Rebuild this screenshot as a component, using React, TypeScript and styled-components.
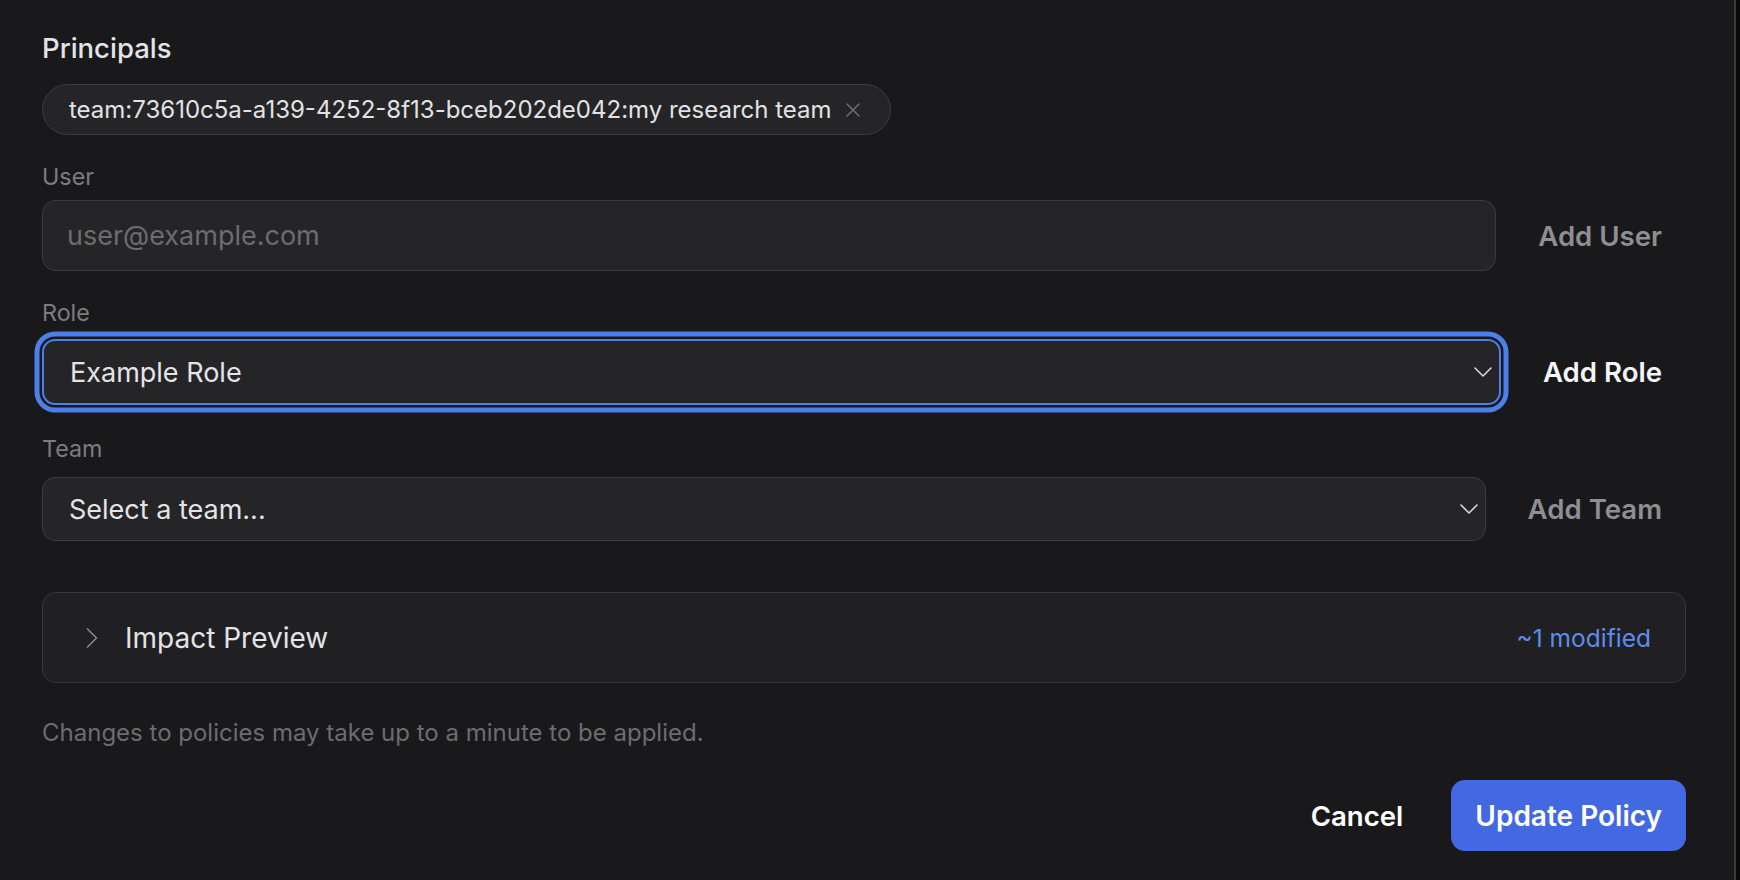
import React from "react";
import styled, { createGlobalStyle } from "styled-components";

const GlobalStyle = createGlobalStyle`
  html, body { margin: 0; padding: 0; background: #0a0a0b; }
  body { font-family: Inter, "Noto Sans", sans-serif; -webkit-font-smoothing: antialiased; }
  * { box-sizing: border-box; }
`;

const Panel = styled.div`
  width: 1736px;
  height: 880px;
  background: #19191b;
  border-right: 2px solid #3a3a3c;
  padding: 31px 48px 0 42px;
  display: flex;
  flex-direction: column;
`;

const Title = styled.div`
  font-size: 27.5px;
  line-height: 34px;
  font-weight: 500;
  color: #e4e4e7;
`;

const Chip = styled.div`
  align-self: flex-start;
  display: inline-flex;
  align-items: center;
  gap: 14px;
  height: 51px;
  margin-top: 19px;
  padding: 0 30px 0 26px;
  border-radius: 999px;
  background: #252527;
  border: 1.5px solid #3c3c3f;
  font-size: 24px;
  color: #e2e2e5;
`;

const RemoveIcon = styled.svg`
  width: 14px;
  height: 14px;
  flex: none;
`;

const Field = styled.div<{ $top: number; $gap: number }>`
  display: flex;
  flex-direction: column;
  gap: ${(p) => p.$gap}px;
  margin-top: ${(p) => p.$top}px;
`;

const Label = styled.div`
  font-size: 23.3px;
  line-height: 28px;
  color: #7c7c81;
`;

const Row = styled.div`
  display: flex;
  align-items: center;
  gap: 18px;
`;

const TextInput = styled.input`
  flex: 1;
  min-width: 0;
  height: 71px;
  background: #252527;
  border: 1.5px solid #3b3b3e;
  border-radius: 13px;
  padding: 0 24px;
  font-family: inherit;
  font-size: 27px;
  color: #e4e4e7;
  outline: none;
  &::placeholder {
    color: #6c6c71;
  }
`;

const SelectBox = styled.div<{ $focused?: boolean; $height: number }>`
  flex: 1;
  min-width: 0;
  height: ${(p) => p.$height}px;
  display: flex;
  align-items: center;
  justify-content: space-between;
  padding: 0 7px 0 26px;
  background: #252527;
  border: ${(p) => (p.$focused ? "2px solid #4d7fe8" : "1.5px solid #3b3b3e")};
  border-radius: 13px;
  box-shadow: ${(p) =>
    p.$focused ? "0 0 0 2.5px #19191b, 0 0 0 7.5px #4d7fe8" : "none"};
  font-size: 27px;
  color: #e4e4e7;
`;

const Chevron = styled.svg`
  width: 18px;
  height: 10px;
  flex: none;
`;

const GhostButton = styled.button<{ $color: string }>`
  flex: none;
  height: 64px;
  padding: 0 24px;
  background: transparent;
  border: none;
  font-family: inherit;
  font-size: 27.6px;
  font-weight: 600;
  color: ${(p) => p.$color};
  cursor: pointer;
`;

const ImpactBox = styled.div`
  margin-top: 51px;
  height: 91px;
  display: flex;
  align-items: center;
  padding: 0 34px 0 43px;
  background: #202022;
  border: 1.5px solid #38383b;
  border-radius: 14px;
`;

const ImpactTitle = styled.div`
  margin-left: 27px;
  flex: 1;
  font-size: 28px;
  color: #e4e4e7;
`;

const Modified = styled.div`
  font-size: 24.5px;
  color: #5b8def;
`;

const Note = styled.div`
  margin-top: 36px;
  font-size: 24px;
  line-height: 28px;
  color: #6c6c71;
`;

const Actions = styled.div`
  margin-top: 33px;
  display: flex;
  justify-content: flex-end;
  align-items: center;
  gap: 24px;
`;

const PrimaryButton = styled.button`
  height: 71px;
  padding: 0 24px;
  background: #4369e2;
  border: none;
  border-radius: 14px;
  font-family: inherit;
  font-size: 28px;
  font-weight: 600;
  color: #ffffff;
  cursor: pointer;
`;

const ChevronDown = () => (
  <Chevron viewBox="0 0 18 10" fill="none">
    <path d="M1 1l8 8 8-8" stroke="#d8d8dc" strokeWidth="1.6" strokeLinecap="round" strokeLinejoin="round" />
  </Chevron>
);

export default function App() {
  return (
    <>
      <GlobalStyle />
      <Panel>
        <Title>Principals</Title>
        <Chip>
          <span>team:73610c5a-a139-4252-8f13-bceb202de042:my research team</span>
          <RemoveIcon viewBox="0 0 14 14" fill="none">
            <path d="M1 1l12 12M13 1L1 13" stroke="#6e6e73" strokeWidth="1.5" strokeLinecap="round" />
          </RemoveIcon>
        </Chip>

        <Field $top={28} $gap={9}>
          <Label>User</Label>
          <Row>
            <TextInput placeholder="user@example.com" />
            <GhostButton $color="#8e8e93">Add User</GhostButton>
          </Row>
        </Field>

        <Field $top={28} $gap={12}>
          <Label>Role</Label>
          <Row>
            <SelectBox $focused $height={66}>
              <span>Example Role</span>
              <ChevronDown />
            </SelectBox>
            <GhostButton $color="#f5f5f7">Add Role</GhostButton>
          </Row>
        </Field>

        <Field $top={30} $gap={14}>
          <Label>Team</Label>
          <Row>
            <SelectBox $height={64}>
              <span>Select a team...</span>
              <ChevronDown />
            </SelectBox>
            <GhostButton $color="#8e8e93">Add Team</GhostButton>
          </Row>
        </Field>

        <ImpactBox>
          <svg width="12" height="20" viewBox="0 0 12 20" fill="none">
            <path d="M1.5 1l9 9-9 9" stroke="#8e8e93" strokeWidth="1.5" strokeLinecap="round" strokeLinejoin="round" />
          </svg>
          <ImpactTitle>Impact Preview</ImpactTitle>
          <Modified>~1 modified</Modified>
        </ImpactBox>

        <Note>Changes to policies may take up to a minute to be applied.</Note>

        <Actions>
          <GhostButton $color="#ffffff">Cancel</GhostButton>
          <PrimaryButton>Update Policy</PrimaryButton>
        </Actions>
      </Panel>
    </>
  );
}
